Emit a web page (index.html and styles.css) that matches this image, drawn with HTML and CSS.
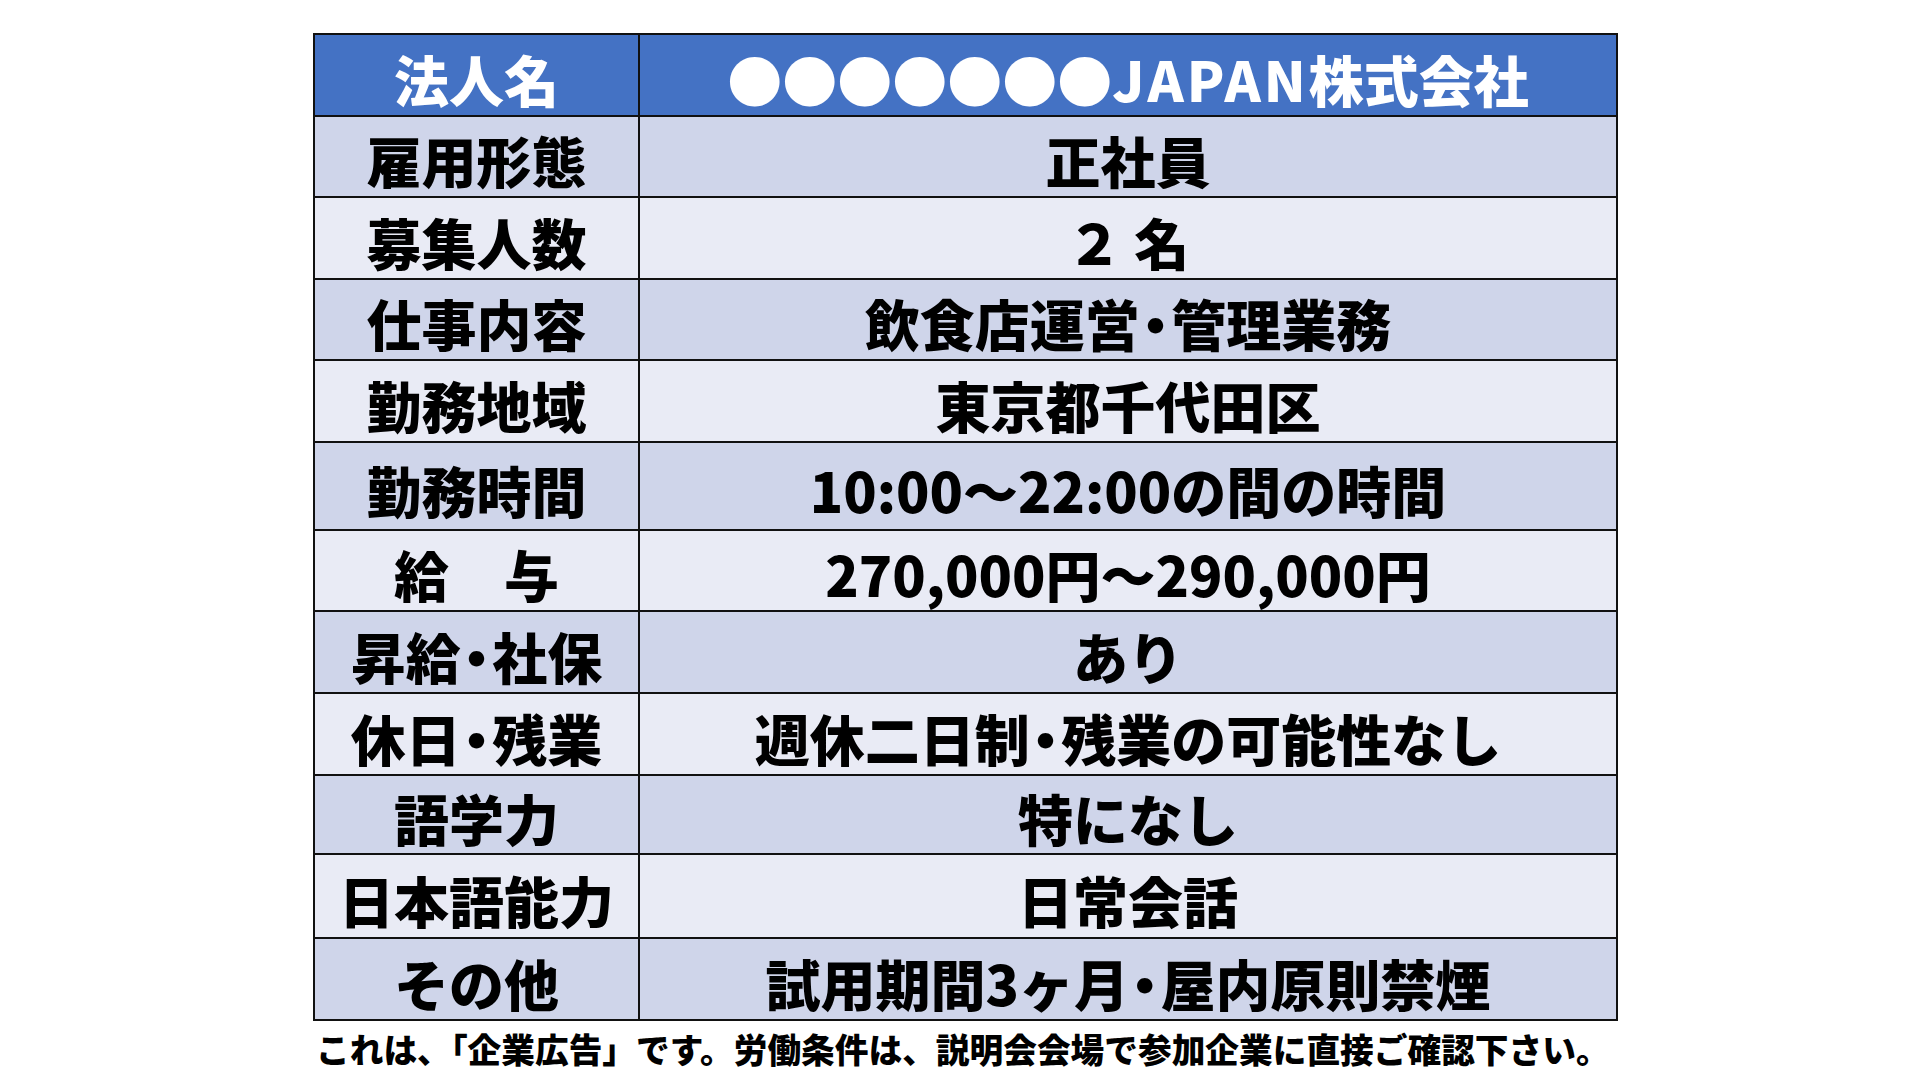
FILE: index.html
```html
<!DOCTYPE html>
<html lang="ja">
<head>
<meta charset="utf-8">
<title>求人情報</title>
<link rel="stylesheet" href="styles.css">
</head>
<body>
<div class="page">
  <div class="sheet">
    <div class="cell head">法人名</div>
    <div class="cell head">●●●●●●●<span class="latin">JAPAN</span>株式会社</div>

    <div class="cell dark">雇用形態</div>
    <div class="cell dark">正社員</div>

    <div class="cell light">募集人数</div>
    <div class="cell light">２ 名</div>

    <div class="cell dark">仕事内容</div>
    <div class="cell dark">飲食店運営<span class="dot">・</span>管理業務</div>

    <div class="cell light">勤務地域</div>
    <div class="cell light">東京都千代田区</div>

    <div class="cell dark">勤務時間</div>
    <div class="cell dark">10:00～22:00の間の時間</div>

    <div class="cell light">給　与</div>
    <div class="cell light">270,000円～290,000円</div>

    <div class="cell dark">昇給<span class="dot">・</span>社保</div>
    <div class="cell dark">あり</div>

    <div class="cell light">休日<span class="dot">・</span>残業</div>
    <div class="cell light">週休二日制<span class="dot">・</span>残業の可能性なし</div>

    <div class="cell dark">語学力</div>
    <div class="cell dark">特になし</div>

    <div class="cell light">日本語能力</div>
    <div class="cell light">日常会話</div>

    <div class="cell dark">その他</div>
    <div class="cell dark">試用期間3ヶ月<span class="dot">・</span>屋内原則禁煙</div>
  </div>
  <p class="note">これは、「企業広告」です。労働条件は、説明会会場で参加企業に直接ご確認下さい。</p>
</div>
</body>
</html>
```
FILE: styles.css
```css
html, body {
  margin: 0;
  padding: 0;
  background: #ffffff;
}

body {
  font-family: "Noto Sans CJK JP", "Noto Sans", sans-serif;
  color: #000000;
}

.page {
  width: 1920px;
  height: 1080px;
  padding: 33px 0 0 313px;
  box-sizing: border-box;
}

.sheet {
  display: grid;
  width: 1305px;
  box-sizing: border-box;
  grid-template-columns: 323px 976px;
  grid-template-rows: 80px 79px 80px 79px 80px 86px 79px 80px 80px 77px 82px 80px;
  gap: 2px;
  padding: 2px;
  background: #111111;
}

.cell {
  display: flex;
  align-items: center;
  justify-content: center;
  padding-top: 6px;
  box-sizing: border-box;
  font-size: 55px;
  font-weight: 900;
  line-height: 1;
  white-space: nowrap;
  letter-spacing: 0;
}

.dot {
  font-feature-settings: "palt" 1;
  padding: 0 2px;
}

.latin {
  letter-spacing: 3px;
}

.head {
  background: #4472c4;
  color: #ffffff;
}

.dark {
  background: #cfd5ea;
}

.light {
  background: #e9ebf5;
}

.note {
  margin: 8px 0 0 3px;
  font-size: 33.7px;
  font-weight: 900;
  line-height: 40px;
  white-space: nowrap;
}
```
